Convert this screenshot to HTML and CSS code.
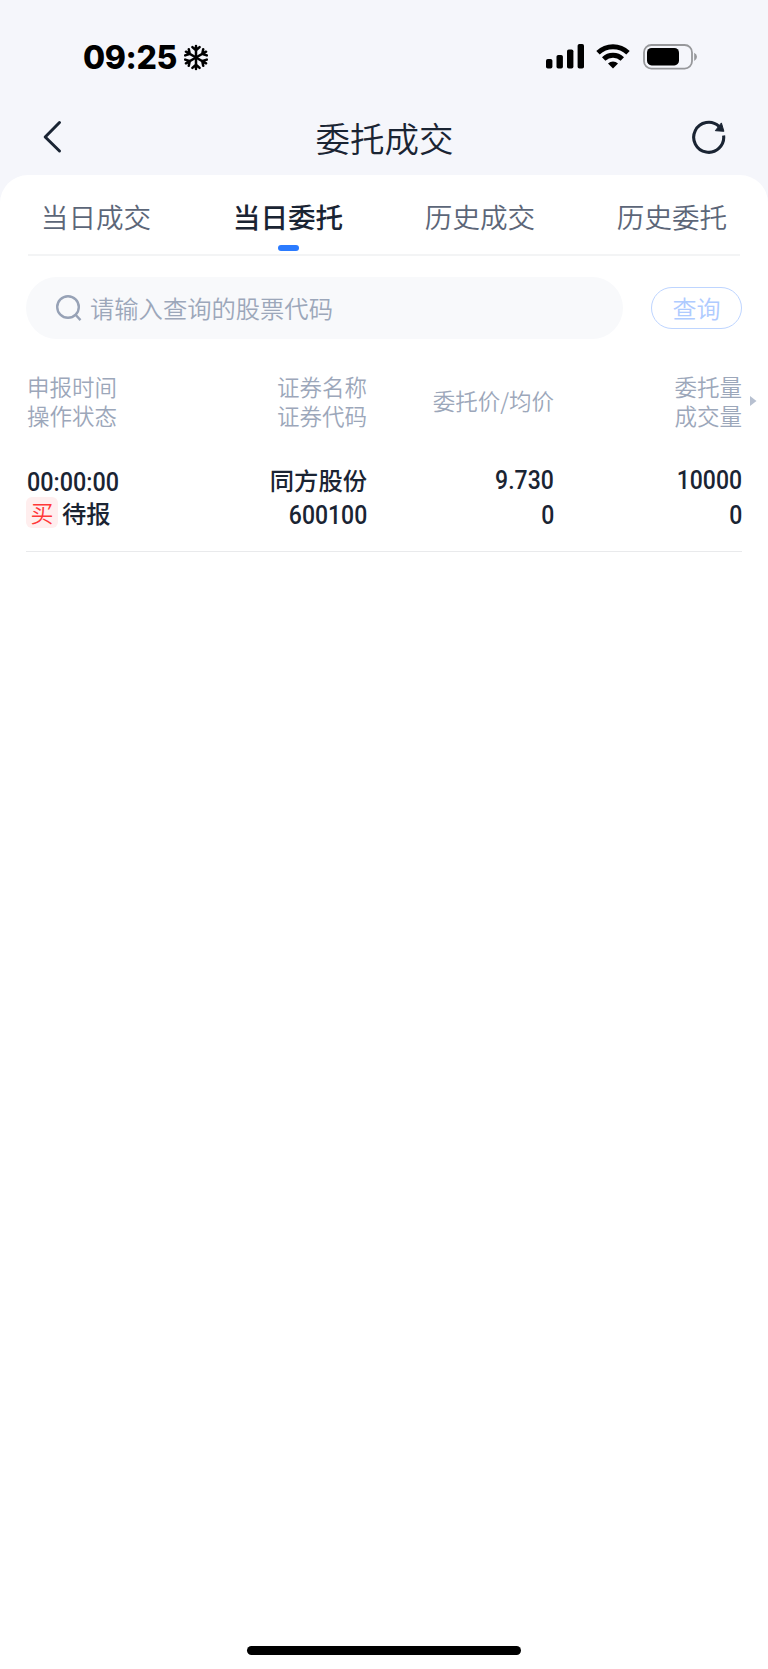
FILE: index.html
```html
<!DOCTYPE html>
<html lang="zh-CN">
<head>
<meta charset="utf-8">
<title>委托成交</title>
<link rel="stylesheet" href="styles.css">
</head>
<body>
<div class="screen">
  <header class="status">
    <div class="status-left">
      <span class="clock">09:25</span>
      <svg class="snow" width="24" height="27" viewBox="-12 -13.5 24 27" fill="none" stroke="#000" stroke-width="2.5" stroke-linecap="round">
        <defs><path id="arm" d="M0 0V-11.6M-3.6 -10.4L0 -7.2L3.6 -10.4"/></defs>
        <use href="#arm"/><use href="#arm" transform="rotate(60)"/><use href="#arm" transform="rotate(120)"/><use href="#arm" transform="rotate(180)"/><use href="#arm" transform="rotate(240)"/><use href="#arm" transform="rotate(300)"/>
      </svg>
    </div>
    <div class="status-right">
      <svg width="38" height="25" viewBox="0 0 38 25"><rect x="0" y="15" width="6.4" height="9.5" rx="1.8"/><rect x="10.5" y="11" width="6.4" height="13.5" rx="1.8"/><rect x="21" y="5.5" width="6.4" height="19" rx="1.8"/><rect x="31.6" y="0" width="6.4" height="24.5" rx="1.8"/></svg>
      <svg class="wifi" width="34" height="25" viewBox="0 0 34 25"><g fill="none" stroke="#000" stroke-width="4.9"><path d="M2 8.8a21.5 21.5 0 0 1 30 0"/><path d="M7.7 15a13.4 13.4 0 0 1 18.6 0"/></g><path d="M17 24.5l-5-4.9a7.2 7.2 0 0 1 10 0z"/></svg>
      <svg class="battery" width="55" height="26" viewBox="0 0 55 26"><rect x="1" y="1" width="48" height="23.6" rx="7.4" fill="none" stroke="#97989b" stroke-width="1.8"/><rect x="4" y="4" width="32" height="17.4" rx="4.6"/><path d="M51.2 8.7q2.8 1.4 2.8 4.1t-2.8 4.1z" fill="#97989b"/></svg>
    </div>
  </header>
  <nav class="navbar">
    <svg width="34" height="34" viewBox="0 0 34 34" fill="none" stroke="#1a2433" stroke-width="3" stroke-linecap="round" stroke-linejoin="round"><path d="M16.5 2.5L2.2 17l14.3 14"/></svg>
    <h1 class="title">委托成交</h1>
    <svg width="34" height="34" viewBox="0 0 34 34"><path d="M31.6 15.5A15 15 0 1 1 27 6.4" fill="none" stroke="#1a2433" stroke-width="3.1"/><path d="M29.4 2.9L31.9 11.3L23.3 10.7z" fill="#1a2433" stroke="#1a2433" stroke-linejoin="round"/></svg>
  </nav>
  <main class="panel">
    <div class="tabs">
      <span class="tab">当日成交</span>
      <span class="tab active">当日委托</span>
      <span class="tab">历史成交</span>
      <span class="tab">历史委托</span>
    </div>
    <div class="search-row">
      <div class="search">
        <svg width="26" height="27" viewBox="0 0 26 27" fill="none" stroke="#97a2b6" stroke-width="2.4"><circle cx="12" cy="12" r="10.8"/><path d="M19.3 19.5l5.2 5.6"/></svg>
        <span>请输入查询的股票代码</span>
      </div>
      <span class="query">查询</span>
    </div>
    <div class="grid head">
      <div class="labels"><span>申报时间</span><span>操作状态</span></div>
      <div class="labels"><span>证券名称</span><span>证券代码</span></div>
      <div class="labels"><span>委托价/均价</span></div>
      <div class="labels"><span>委托量</span><span>成交量</span></div>
      <svg class="more" width="7" height="10" viewBox="0 0 7 10"><path d="M0 0l6.5 5L0 10z" fill="#b7c0d0"/></svg>
    </div>
    <div class="grid order">
      <div class="cell first"><span class="num time">00:00:00</span><span class="state"><b class="tag">买</b><span class="name">待报</span></span></div>
      <div class="cell"><span class="name">同方股份</span><span class="num">600100</span></div>
      <div class="cell"><span class="num">9.730</span><span class="num">0</span></div>
      <div class="cell"><span class="num">10000</span><span class="num">0</span></div>
    </div>
  </main>
  <div class="home"></div>
</div>
</body>
</html>
```
FILE: styles.css
```css
* { box-sizing: border-box; }
body {
  margin: 0;
  background: #f5f6fb;
  color: #1a2433;
  font-family: "Noto Sans CJK SC", sans-serif;
  font-weight: 350;
}
svg { display: block; flex: none; }
.screen {
  width: 768px;
  height: 1669px;
  display: flex;
  flex-direction: column;
  background: #f5f6fb;
}
.status {
  height: 100px;
  padding: 44px 70px 0 83px;
  display: flex;
  justify-content: space-between;
  align-items: flex-start;
}
.status-left, .status-right { display: flex; }
.clock {
  color: #000;
  font: 800 32px/26px Inter, sans-serif;
  letter-spacing: -0.4px;
  margin-top: 1px;
}
.snow { margin-left: 7px; }
.wifi { margin-left: 12px; }
.battery { margin-left: 13px; }
.navbar {
  height: 75px;
  padding: 0 42px 2px 43px;
  display: flex;
  justify-content: space-between;
  align-items: center;
}
.title {
  margin: 0;
  font-size: 34.5px;
  line-height: 50px;
  font-weight: 350;
}
.panel {
  flex: 1;
  background: #fff;
  border-radius: 28px 28px 0 0;
}
.tabs {
  height: 81px;
  display: flex;
  background: linear-gradient(#f3f4f5, #f3f4f5) 28px 79px / 712px 2px no-repeat;
}
.tab {
  flex: 1;
  text-align: center;
  font-size: 27.6px;
  line-height: 40px;
  padding-top: 21px;
  color: #5c6678;
}
.active {
  color: #1a2433;
  font-weight: 500;
}
.active::after {
  content: "";
  display: block;
  width: 21px;
  height: 6px;
  margin: 9px auto 0;
  border-radius: 3px;
  background: #2b7bff;
}
.search-row {
  padding: 21px 26px 0 26px;
  display: flex;
  align-items: center;
  justify-content: space-between;
}
.search {
  width: 597px;
  height: 62px;
  padding-left: 30px;
  display: flex;
  align-items: center;
  gap: 8px;
  border-radius: 31px;
  background: #f8f9fb;
  color: #9ca7ba;
  font-size: 24.3px;
  line-height: 36px;
}
.query {
  width: 91px;
  height: 42px;
  border: 1.5px solid #bed5ff;
  border-radius: 21px;
  text-align: center;
  font-size: 24px;
  line-height: 39px;
  color: #afcbff;
}
.grid {
  display: grid;
  grid-template-columns: 1fr 187px 187px 188px;
  text-align: right;
}
.grid > :first-child { text-align: left; }
.head {
  position: relative;
  margin: 33px 26px 0 27px;
  align-items: center;
  color: #9ca7ba;
  font-size: 22.5px;
  line-height: 28.5px;
}
.labels { display: flex; flex-direction: column; }
.more {
  position: absolute;
  right: -15px;
  top: 24px;
}
.order {
  margin: 29px 26px 0;
  padding: 0 0 0 1px;
  height: 94px;
  border-bottom: 1px solid #e9eaec;
}
.cell {
  display: flex;
  flex-direction: column;
  align-items: flex-end;
  padding-top: 5px;
}
.cell.first { align-items: flex-start; padding-top: 7px; }
.name, .num {
  height: 35px;
  line-height: 34px;
  font-weight: 500;
  font-size: 24.3px;
}
.num {
  font-family: Roboto, "Noto Sans CJK SC", sans-serif;
  font-size: 25px;
  line-height: 35px;
  transform: scaleX(0.92);
  transform-origin: right;
}
.num.time {
  height: 30px;
  transform: scaleX(0.935);
  transform-origin: left;
}
.state {
  display: flex;
  align-items: center;
  gap: 4px;
  margin-left: -1px;
}
.state .name { line-height: 35px; }
.tag {
  width: 32px;
  height: 31px;
  border-radius: 6px;
  background: #ffeeee;
  color: #ff3838;
  text-align: center;
  font-weight: 350;
  font-size: 23px;
  line-height: 31px;
}
.home {
  position: absolute;
  left: 247px;
  top: 1646px;
  width: 274px;
  height: 9px;
  border-radius: 5px;
  background: #000;
}
```
